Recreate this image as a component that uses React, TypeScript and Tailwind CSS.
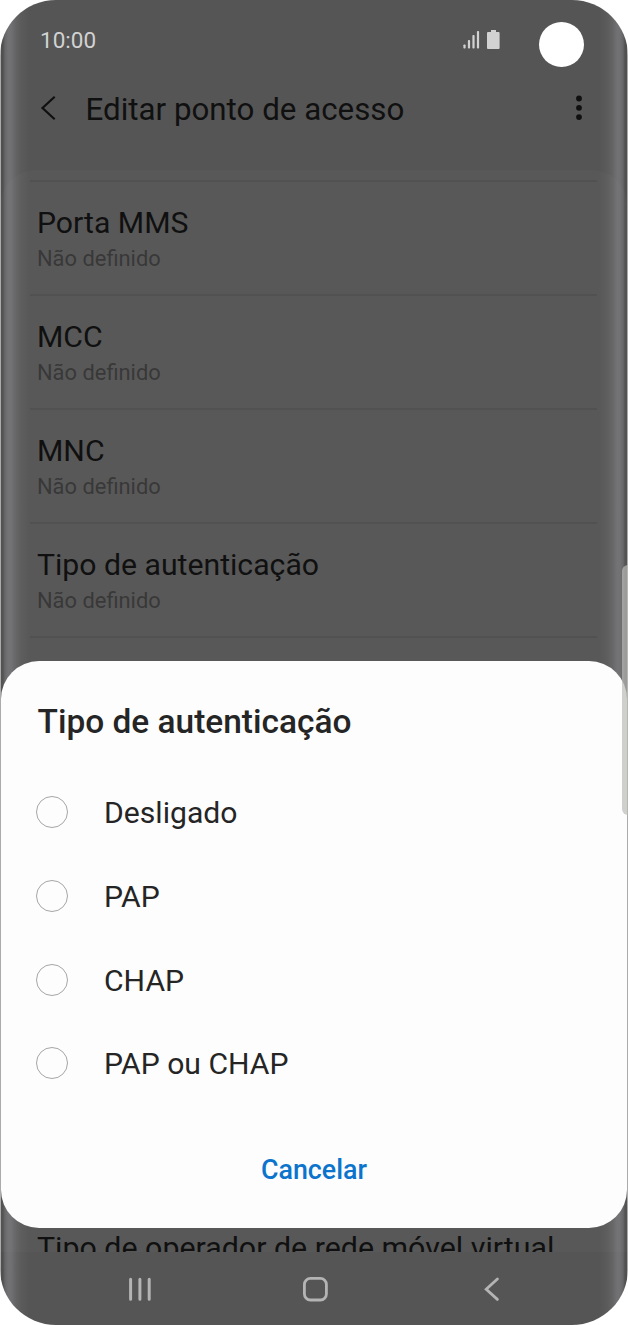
const ROWS = ["Porta MMS", "MCC", "MNC", "Tipo de autenticação"];

const OPTIONS = ["Desligado", "PAP", "CHAP", "PAP ou CHAP"];

function StatusBar() {
  return (
    <div className="flex h-[82px] pl-10 text-[#d2d2d2]">
      <span className="mt-[25px] h-[30px] text-[22.5px] leading-[30px]">10:00</span>
      <svg className="mt-[30px] ml-auto" width="38" height="20" viewBox="0 0 38 20" fill="currentColor">
        <rect x="0.4" y="14.5" width="2.2" height="4" rx="0.8" />
        <rect x="4.9" y="10" width="2.2" height="8.5" rx="0.8" />
        <rect x="9.4" y="5" width="2.2" height="13.5" rx="0.8" />
        <rect x="13.9" y="1" width="2.2" height="17.5" rx="0.8" />
        <path d="M28 0h5v2h2.6a1 1 0 0 1 1 1v15a1 1 0 0 1-1 1H25a1 1 0 0 1-1-1V3a1 1 0 0 1 1-1h3z" />
      </svg>
      <div className="mt-[21.5px] mr-[44.5px] ml-[38px] h-[45px] w-[45px] rounded-full bg-white" />
    </div>
  );
}

function Header() {
  return (
    <header className="flex h-[88px] items-start pr-[44px] pl-10 text-[#101010]">
      <svg className="mt-[13px]" width="18" height="26" viewBox="0 0 18 26" fill="none" stroke="currentColor" strokeWidth="2.2">
        <path d="M14.7 1.8 2.5 13l12.2 11.2" />
      </svg>
      <h1 className="mt-[8px] ml-[27.5px] text-[31.3px] leading-10 whitespace-nowrap">Editar ponto de acesso</h1>
      <svg className="mt-[13px] ml-auto" width="10" height="26" viewBox="0 0 10 26" fill="currentColor">
        <circle cx="5" cy="3.5" r="2.9" />
        <circle cx="5" cy="12.8" r="2.9" />
        <circle cx="5" cy="22.1" r="2.9" />
      </svg>
    </header>
  );
}

function SettingsList() {
  return (
    <main className="flex h-[1082px] flex-col overflow-hidden rounded-t-[36px] bg-white/[0.02] pt-[10px]">
      {ROWS.map((row) => (
        <div key={row} className="mr-[31px] ml-[30px] h-[114px] shrink-0 border-t-2 border-[#515151] pt-[23px] pl-[7px]">
          <p className="text-[30.2px] leading-9 text-[#101010]">{row}</p>
          <p className="mt-[3px] text-[21.9px] leading-[30px] text-[#383838]">Não definido</p>
        </div>
      ))}
      <div className="mr-[31px] ml-[30px] border-t-2 border-[#515151]" />
      <p className="mt-auto -mb-[14px] pl-[37px] text-[30.35px] leading-9 whitespace-nowrap text-[#101010]">
        Tipo de operador de rede móvel virtual
      </p>
    </main>
  );
}

function NavBar() {
  return (
    <nav className="flex h-[74px] items-center justify-between pr-[125.5px] pl-[126.5px] text-[#b4b4b4]">
      <svg width="26" height="26" viewBox="0 0 26 26" fill="none" stroke="currentColor" strokeWidth="3" strokeLinecap="round">
        <path d="M3.6 3.2v20M12.9 3.2v20M22.2 3.2v20" />
      </svg>
      <svg width="26" height="26" viewBox="0 0 26 26" fill="none" stroke="currentColor" strokeWidth="2.8">
        <rect x="2.4" y="2.4" width="22" height="21.6" rx="6" />
      </svg>
      <svg width="26" height="26" viewBox="0 0 26 26" fill="none" stroke="currentColor" strokeWidth="2.8" strokeLinecap="round">
        <path d="M20.4 3 9.2 13.2 20.4 23.4" />
      </svg>
    </nav>
  );
}

function AuthTypeDialog() {
  return (
    <div className="absolute top-[660.5px] left-px flex h-[567px] w-[626px] flex-col rounded-[38px] bg-[#fdfdfd] pt-[41px] text-[#252525]">
      <h2 className="pl-[36.5px] text-[33.45px] leading-10 font-medium">Tipo de autenticação</h2>
      <div className="mt-[30px]">
        {OPTIONS.map((option) => (
          <label key={option} className="flex h-[83.7px] items-center pl-[35px]">
            <span className="-mt-[2px] h-8 w-8 rounded-full border-[1.5px] border-[#a6a6a6]" />
            <span className="ml-[36px] text-[30.15px] leading-10">{option}</span>
          </label>
        ))}
      </div>
      <button className="mt-[44px] text-[26.8px] leading-10 font-medium text-[#0c74cc]">Cancelar</button>
    </div>
  );
}

export default function App() {
  return (
    <div className="h-[1325px] w-[628px] overflow-hidden bg-white font-[Roboto,sans-serif]">
      <div className="relative h-[1324.5px] overflow-hidden rounded-[56px] bg-[linear-gradient(to_right,#aaa_0px,#aaa_1px,#4f4f50_1px,#515152_3px,#666668_5px,#717174_8px,#717174_11px,#636364_16px,#5b5b5b_21px,#555_29px,#555_599px,#5b5b5b_607px,#636364_612px,#717174_617px,#717174_620px,#666668_623px,#515152_625px,#4f4f50_627px,#aaa_627px,#aaa_628px)]">
        <StatusBar />
        <Header />
        <SettingsList />
        <NavBar />
        <AuthTypeDialog />
        {/* edge panel handle */}
        <div className="absolute top-[565px] right-0 h-[250px] w-[6.5px] rounded-l-lg bg-[#bbbab6]/70" />
      </div>
    </div>
  );
}
